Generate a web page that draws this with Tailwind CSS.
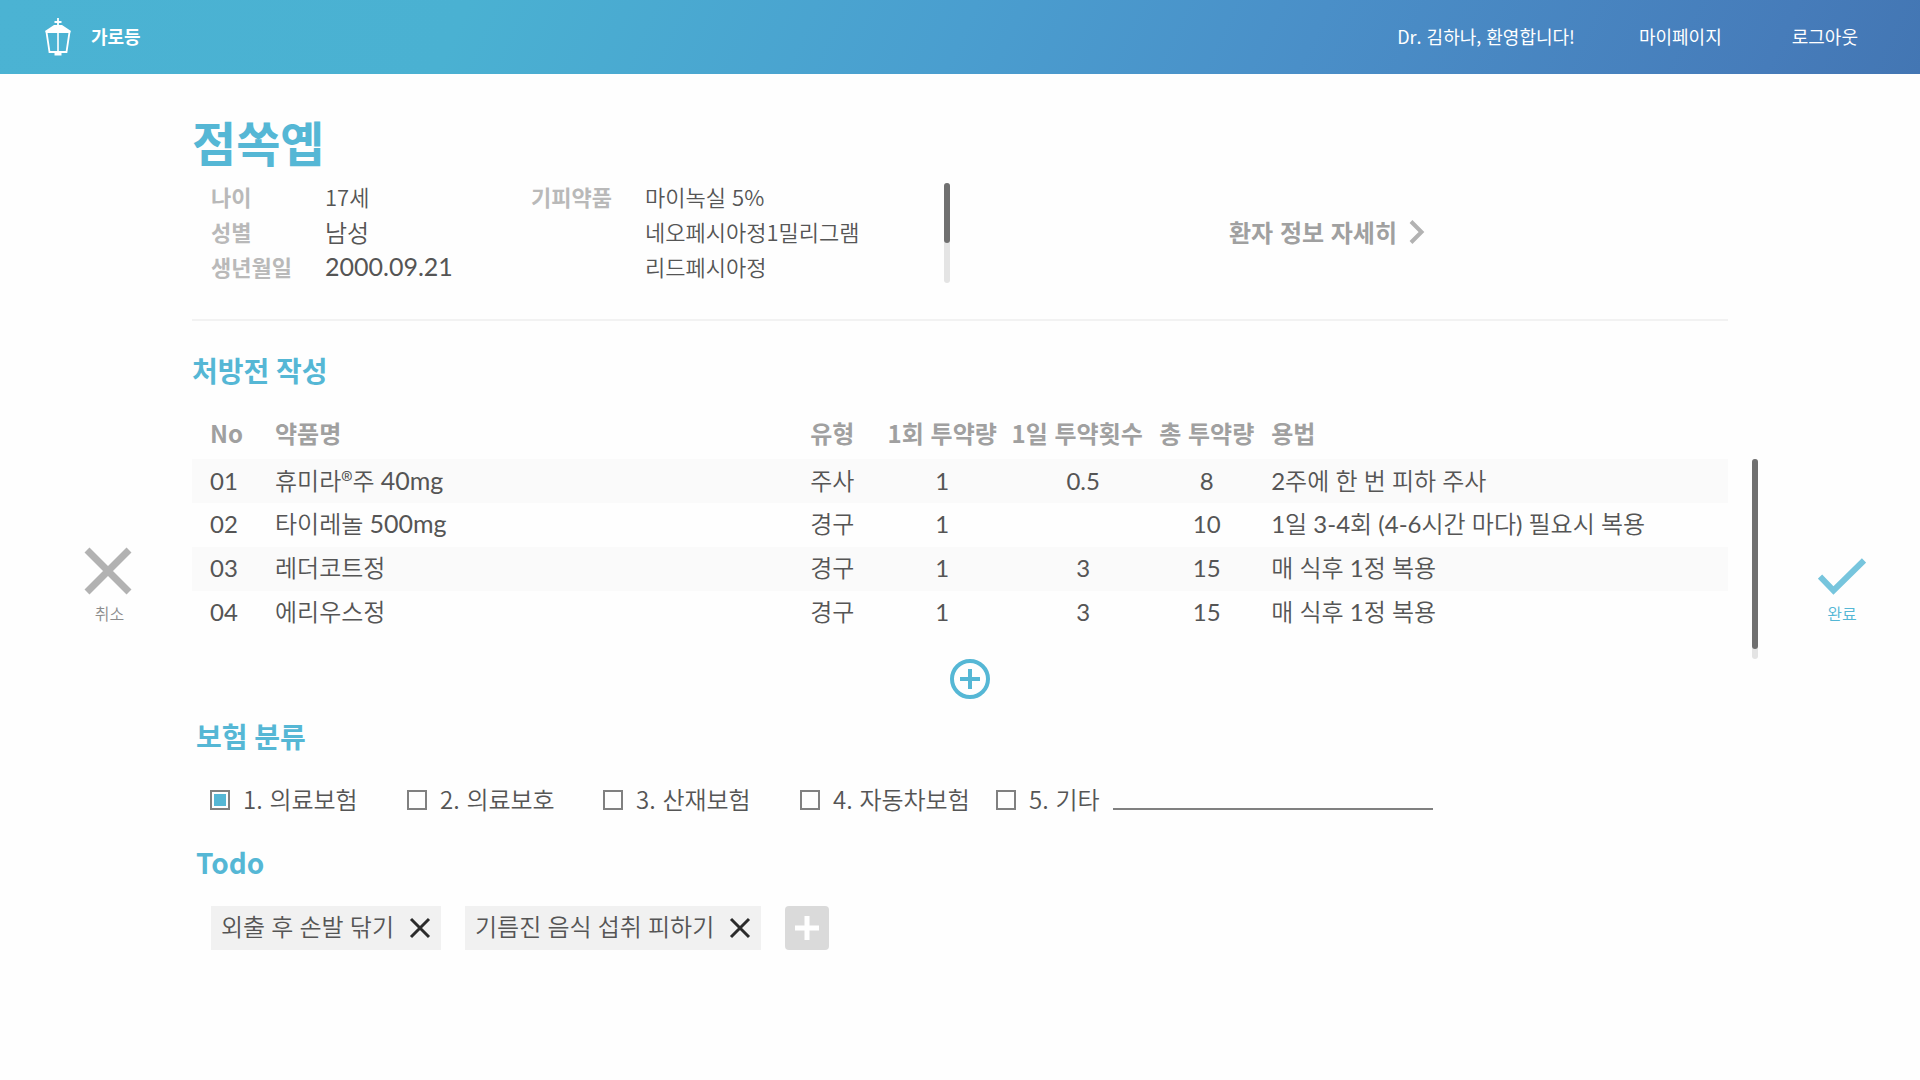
<!DOCTYPE html>
<html lang="ko">
<head>
<meta charset="utf-8">
<meta name="viewport" content="width=device-width, initial-scale=1">
<title>가로등 - 처방전 작성</title>
<script src="https://cdn.jsdelivr.net/npm/@tailwindcss/browser@4"></script>
</head>
<body class="min-h-screen bg-[#fefefe] font-['Noto_Sans_CJK_KR',sans-serif] text-[#555]">

<header class="flex h-[74px] items-center justify-between bg-[linear-gradient(115deg,#4bb3d3_0%,#4ab1d2_24%,#4a9ecf_50%,#4a8fc8_68%,#467cba_92%,#4376b3_100%)] pr-[62px] pl-11 text-lg text-white">
  <a href="#" class="flex items-center gap-[19px] font-bold">
    <svg class="h-[38px] w-7" viewBox="0 0 28 38" fill="none" aria-hidden="true">
      <path d="M14 0v9M10.500 4h7" stroke="#fff" stroke-width="1.800"/>
      <path d="M10 7h8l9 6-1 2H2l-1-2z" fill="#fff"/>
      <path d="M2.500 14l3 20h17l3-20" stroke="#fff" stroke-width="1.800"/>
      <path d="M14 14v20" stroke="#fff" stroke-width="1.600"/>
      <path d="M10.500 33.500h7v4h-7z" fill="#fff"/>
    </svg>
    <span class="pb-0.5">가로등</span>
  </a>
  <nav class="flex items-center gap-[70px] pb-0.5">
    <span class="-mr-1.5">Dr. 김하나, 환영합니다!</span>
    <a href="#">마이페이지</a>
    <a href="#">로그아웃</a>
  </nav>
</header>

<main>
  <section class="mx-[10%] border-b-2 border-[#f2f2f2] pt-[37px] pb-[35px]">
    <h1 class="text-5xl leading-[60px] font-bold text-[#55b7d5]">점쏙옙</h1>
    <div class="mt-2 flex pl-[19px] text-[22px] leading-[35px] font-[350]">
      <dl class="grid w-80 shrink-0 grid-cols-[114px_1fr]">
        <dt class="font-bold text-[#b9b9b9]">나이</dt>
        <dd>17세</dd>
        <dt class="font-bold text-[#b9b9b9]">성별</dt>
        <dd class="text-2xl leading-[35px]">남성</dd>
        <dt class="font-bold text-[#b9b9b9]">생년월일</dt>
        <dd class="font-['Lato','Noto_Sans_CJK_KR_DemiLight','Noto_Sans_CJK_KR',sans-serif] text-[25px] leading-[35px] font-normal">2000.09.21</dd>
      </dl>
      <dl class="grid w-[413px] shrink-0 grid-cols-[114px_1fr]">
        <dt class="font-bold text-[#b9b9b9]">기피약품</dt>
        <dd>마이녹실 5%</dd>
        <dd class="col-start-2">네오페시아정1밀리그램</dd>
        <dd class="col-start-2">리드페시아정</dd>
      </dl>
      <div class="mt-1 h-[100px] w-1.5 shrink-0 rounded-full bg-[#e4e4e4]">
        <div class="h-[60%] rounded-full bg-[#707070]"></div>
      </div>
      <div class="flex flex-1 items-center justify-center pr-6">
        <a href="#" class="flex items-center gap-3 text-2xl font-bold text-[#a0a0a0]">
          환자 정보 자세히
          <svg class="h-6 w-4" viewBox="0 0 16 24" fill="none" stroke="#b2b2b2" stroke-width="4" aria-hidden="true"><path d="M2 1.500L12.500 12L2 22.500"/></svg>
        </a>
      </div>
    </div>
  </section>

  <section class="pt-[30px]">
    <h2 class="mx-[10%] font-['Lato','Noto_Sans_CJK_KR',sans-serif] text-[28px] leading-10 font-bold text-[#55b7d5]">처방전 작성</h2>
    <div class="mt-[18px] grid grid-cols-[10%_80%_10%] items-start">
      <button type="button" class="mt-[138px] ml-6 flex flex-col items-center gap-1.5 justify-self-center text-base leading-6 font-[350] text-[#8c8c8c]">
        <svg class="size-12" viewBox="0 0 48 48" stroke="#b2b2b2" stroke-width="7" aria-hidden="true"><path d="M3 3L45 45M45 3L3 45"/></svg>
        <span class="pl-[3px]">취소</span>
      </button>
      <table class="w-full table-fixed border-collapse text-2xl leading-[35px]">
        <colgroup>
          <col class="w-[83px]"><col><col class="w-[66px]"><col class="w-[132px]"><col class="w-[138px]"><col class="w-[121px]"><col class="w-[30%]">
        </colgroup>
        <thead class="text-[#a0a0a0]">
          <tr class="h-[50px] text-left whitespace-nowrap">
            <th class="pb-1 pl-[18px]">No</th><th class="pb-1">약품명</th><th class="pb-1">유형</th>
            <th class="pb-1 text-center">1회 투약량</th><th class="pb-1 text-center">1일 투약횟수</th><th class="pb-1 text-center">총 투약량</th>
            <th class="pb-1 pl-1">용법</th>
          </tr>
        </thead>
        <tbody class="font-['Lato','Noto_Sans_CJK_KR_DemiLight','Noto_Sans_CJK_KR',sans-serif]">
          <tr class="h-11 bg-[#fafafa]">
            <td class="pb-0.5 pl-[18px]">01</td><td class="pb-0.5">휴미라<span class="font-['Noto_Sans_CJK_KR_DemiLight','Noto_Sans_CJK_KR',sans-serif]">®</span>주 <span class="text-[25px]">40mg</span></td><td class="pb-0.5">주사</td>
            <td class="pb-0.5 text-center">1</td><td class="pb-0.5 pl-3 text-center">0.5</td><td class="pb-0.5 text-center">8</td>
            <td class="pb-0.5 pl-1">2주에 한 번 피하 주사</td>
          </tr>
          <tr class="h-11">
            <td class="pb-1 pl-[18px]">02</td><td class="pb-1">타이레놀 <span class="text-[25px]">500mg</span></td><td class="pb-1">경구</td>
            <td class="pb-1 text-center">1</td><td></td><td class="pb-1 text-center">10</td>
            <td class="pb-1 pl-1">1일 3-4회 (4-6시간 마다) 필요시 복용</td>
          </tr>
          <tr class="h-11 bg-[#fafafa]">
            <td class="pb-1 pl-[18px]">03</td><td class="pb-1">레더코트정</td><td class="pb-1">경구</td>
            <td class="pb-1 text-center">1</td><td class="pb-1 pl-3 text-center">3</td><td class="pb-1 text-center">15</td>
            <td class="pb-1 pl-1">매 식후 1정 복용</td>
          </tr>
          <tr class="h-11">
            <td class="pb-1 pl-[18px]">04</td><td class="pb-1">에리우스정</td><td class="pb-1">경구</td>
            <td class="pb-1 text-center">1</td><td class="pb-1 pl-3 text-center">3</td><td class="pb-1 text-center">15</td>
            <td class="pb-1 pl-1">매 식후 1정 복용</td>
          </tr>
        </tbody>
      </table>
      <div class="flex items-start pl-6">
        <div class="mt-[50px] h-[200px] w-1.5 rounded-full bg-[#e4e4e4]">
          <div class="h-[95%] rounded-full bg-[#707070]"></div>
        </div>
        <button type="button" class="mt-[138px] ml-[60px] flex flex-col items-center gap-1.5 text-base leading-6 font-[350] text-[#55b7d5]">
          <svg class="size-12" viewBox="0 0 48 48" fill="none" stroke="#77c5dd" stroke-width="6" aria-hidden="true"><path d="M2 29.500L15.500 43.500L46 13.500"/></svg>
          완료
        </button>
      </div>
    </div>
    <button type="button" aria-label="약품 추가" class="mx-auto block translate-x-2.5">
      <svg class="size-10" viewBox="0 0 40 40" fill="none" stroke="#55b7d5" stroke-width="4" aria-hidden="true"><circle cx="20" cy="20" r="18"/><path d="M20 10v20M10 20h20"/></svg>
    </button>
  </section>

  <section class="mx-[10%] pt-[18px] pl-1">
    <h2 class="font-['Lato','Noto_Sans_CJK_KR',sans-serif] text-[28px] leading-10 font-bold text-[#55b7d5]">보험 분류</h2>
    <div class="mt-[22px] flex pl-3.5 text-2xl leading-10 font-[350] whitespace-nowrap">
      <label class="flex w-[197px] items-center gap-[13px]"><input type="checkbox" checked class="size-5 appearance-none border-2 border-[#808080] p-0.5 checked:bg-[#55b7d5] checked:bg-clip-content"><span class="pb-0.5">1. 의료보험</span></label>
      <label class="flex w-[196px] items-center gap-[13px]"><input type="checkbox" class="size-5 appearance-none border-2 border-[#808080] p-0.5 checked:bg-[#55b7d5] checked:bg-clip-content"><span class="pb-0.5">2. 의료보호</span></label>
      <label class="flex w-[197px] items-center gap-[13px]"><input type="checkbox" class="size-5 appearance-none border-2 border-[#808080] p-0.5 checked:bg-[#55b7d5] checked:bg-clip-content"><span class="pb-0.5">3. 산재보험</span></label>
      <label class="flex w-[196px] items-center gap-[13px]"><input type="checkbox" class="size-5 appearance-none border-2 border-[#808080] p-0.5 checked:bg-[#55b7d5] checked:bg-clip-content"><span class="pb-0.5">4. 자동차보험</span></label>
      <label class="flex items-center gap-[13px]"><input type="checkbox" class="size-5 appearance-none border-2 border-[#808080] p-0.5 checked:bg-[#55b7d5] checked:bg-clip-content"><span class="pb-0.5">5. 기타</span></label>
      <input type="text" aria-label="기타 보험" class="ml-[13px] mt-px h-[30px] w-80 border-b-2 border-[#808080] bg-transparent outline-none">
    </div>
  </section>

  <section class="mx-[10%] pt-[21px] pl-1">
    <h2 class="text-[28px] leading-10 font-bold text-[#55b7d5]">Todo</h2>
    <ul class="mt-6 flex gap-6 pl-[15px] font-['Lato','Noto_Sans_CJK_KR_DemiLight','Noto_Sans_CJK_KR',sans-serif] text-2xl leading-10 whitespace-nowrap">
      <li class="flex h-11 items-center gap-[15px] bg-[#f1f1f1] px-2.5"><span class="pb-[3px]">외출 후 손발 닦기</span>
        <button type="button" aria-label="외출 후 손발 닦기 삭제"><svg class="size-[22px]" viewBox="0 0 22 22" stroke="#2b2b2b" stroke-width="3" aria-hidden="true"><path d="M2 2L20 20M20 2L2 20"/></svg></button>
      </li>
      <li class="flex h-11 items-center gap-[15px] bg-[#f1f1f1] px-2.5"><span class="pb-[3px]">기름진 음식 섭취 피하기</span>
        <button type="button" aria-label="기름진 음식 섭취 피하기 삭제"><svg class="size-[22px]" viewBox="0 0 22 22" stroke="#2b2b2b" stroke-width="3" aria-hidden="true"><path d="M2 2L20 20M20 2L2 20"/></svg></button>
      </li>
      <li>
        <button type="button" aria-label="할 일 추가" class="grid size-11 place-items-center rounded bg-[#dadada]"><svg class="size-6" viewBox="0 0 24 24" stroke="#fff" stroke-width="5" aria-hidden="true"><path d="M12 0v24M0 12h24"/></svg></button>
      </li>
    </ul>
  </section>
</main>
</body>
</html>
